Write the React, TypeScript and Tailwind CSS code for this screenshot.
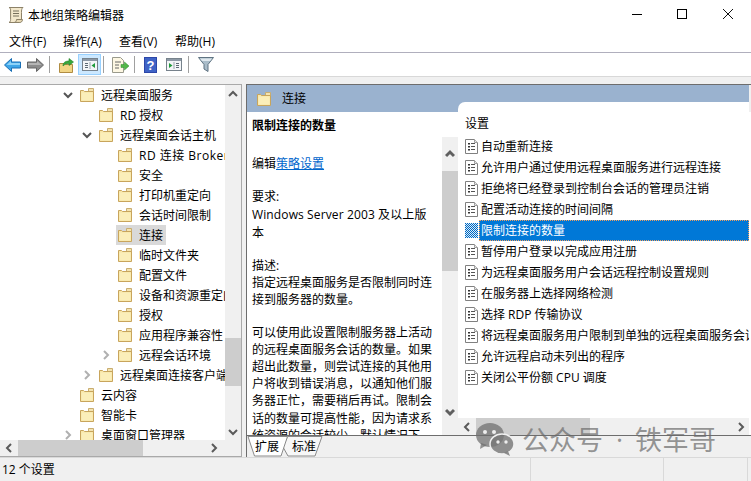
import React from "react";

const Folder = ({ className = "" }: { className?: string }) => (
  <svg width="15" height="14" viewBox="0 0 15 14" className={`shrink-0 ${className}`}>
    <path d="M8.5 0.5h5v11h-5z" fill="#f3e3b0" stroke="#c9ad70" />
    <path d="M0.5 2.5h3l1 1h9v10h-13z" fill="#f8e6a8" stroke="#c8a55c" />
    <path d="M1.5 4.5h11v8h-11z" fill="#fbeeb9" />
  </svg>
);

const Chevron = ({ dir, color = "#5a5a5a", w = 2 }: { dir: "up" | "down" | "left" | "right"; color?: string; w?: number }) => {
  const d = {
    up: "M1 7l4-4 4 4",
    down: "M1 3l4 4 4-4",
    left: "M7 1L3 5l4 4",
    right: "M3 1l4 4-4 4",
  }[dir];
  return (
    <svg width="10" height="10" viewBox="0 0 10 10" className="shrink-0">
      <path d={d} fill="none" stroke={color} strokeWidth={w} />
    </svg>
  );
};

const Policy = ({ selected = false }: { selected?: boolean }) => (
  <svg width="13" height="15" viewBox="0 0 13 15" className="shrink-0">
    <defs>
      <pattern id="dither" width="2" height="2" patternUnits="userSpaceOnUse">
        <rect width="2" height="2" fill="#d8ecfb" />
        <rect width="1" height="1" fill="#0067c0" />
        <rect x="1" y="1" width="1" height="1" fill="#0067c0" />
      </pattern>
    </defs>
    {selected ? (
      <rect width="13" height="15" fill="url(#dither)" />
    ) : (
      <>
        <path d="M0.5 0.5h9l3 3v11h-12z" fill="#fff" stroke="#808080" />
        <path d="M9.5 0.5v3h3" fill="#e8e8e8" stroke="#a0a0a0" />
        <path d="M3 4h2v1.500H3zM3 7h2v1.500H3zM3 10h2v1.500H3z" fill="#333" />
        <path d="M6 4h4v1H6zM6 7h4v1H6zM6 10h4v1H6z" fill="#555" />
      </>
    )}
  </svg>
);

const Sep = () => <div className="w-px h-[17px] bg-[#a0a0a0] shrink-0" />;

type Row = { level: number; label: string; arrow?: "down" | "right"; selected?: boolean; latin?: boolean };
const rows: Row[] = [
  { level: 0, label: "远程桌面服务", arrow: "down" },
  { level: 1, label: "RD 授权" },
  { level: 1, label: "远程桌面会话主机", arrow: "down" },
  { level: 2, label: "RD 连接 Broker", latin: true },
  { level: 2, label: "安全" },
  { level: 2, label: "打印机重定向" },
  { level: 2, label: "会话时间限制" },
  { level: 2, label: "连接", selected: true },
  { level: 2, label: "临时文件夹" },
  { level: 2, label: "配置文件" },
  { level: 2, label: "设备和资源重定向" },
  { level: 2, label: "授权" },
  { level: 2, label: "应用程序兼容性" },
  { level: 2, label: "远程会话环境", arrow: "right" },
  { level: 1, label: "远程桌面连接客户端", arrow: "right" },
  { level: 0, label: "云内容" },
  { level: 0, label: "智能卡" },
  { level: 0, label: "桌面窗口管理器", arrow: "right" },
];

const settings = [
  "自动重新连接",
  "允许用户通过使用远程桌面服务进行远程连接",
  "拒绝将已经登录到控制台会话的管理员注销",
  "配置活动连接的时间间隔",
  "限制连接的数量",
  "暂停用户登录以完成应用注册",
  "为远程桌面服务用户会话远程控制设置规则",
  "在服务器上选择网络检测",
  "选择 RDP 传输协议",
  "将远程桌面服务用户限制到单独的远程桌面服务会话",
  "允许远程启动未列出的程序",
  "关闭公平份额 CPU 调度",
];

const descLines = [
  "可以使用此设置限制服务器上活动",
  "的远程桌面服务会话的数量。如果",
  "超出此数量，则尝试连接的其他用",
  "户将收到错误消息，以通知他们服",
  "务器正忙，需要稍后再试。限制会",
  "话的数量可提高性能，因为请求系",
  "统资源的会话较少。默认情况下，",
];

const levelPad: Record<number, string> = { 0: "pl-[63px]", 1: "pl-[82px]", 2: "pl-[101px]" };

export default function App() {
  return (
    <div
      className="relative w-[751px] h-[481px] overflow-hidden bg-white text-black text-[12px] flex flex-col"
      style={{ fontFamily: '"Open Sans","Noto Sans CJK SC",sans-serif' }}
    >
      {/* Title bar */}
      <div className="h-[30px] flex items-center shrink-0 pl-[7px]">
        <svg width="18" height="18" viewBox="0 0 18 18" className="shrink-0">
          <path d="M4 1.5h12c-1.5 1-1.5 3-1.5 5v7c0 2-1 3-2.5 3H2c1.2-.6 1.6-1.6 1.6-3V4c0-1.300-.5-2-1.600-2.500z" fill="#f3e8cc" stroke="#8d8268" />
          <path d="M6 5h6M6 7.500h6M6 10h6" stroke="#77705c" strokeWidth="1" />
          <path d="M12.500 16.500c1.500 0 3-.8 3-3H9.500c0 2-1 3-2.500 3z" fill="#e6d8b4" stroke="#8d8268" />
        </svg>
        <span className="ml-[3px] pt-[2px]">本地组策略编辑器</span>
        <div className="ml-auto flex items-center pr-[18px] pb-[2px]">
          <div className="w-[10px] h-px bg-black mr-[35px]" />
          <div className="w-[10px] h-[10px] border border-black mr-[36px]" />
          <svg width="10" height="10" viewBox="0 0 10 10">
            <path d="M0 0l10 10M10 0L0 10" stroke="#111" strokeWidth="1" />
          </svg>
        </div>
      </div>

      {/* Menu */}
      <div className="h-[23px] flex items-center shrink-0 pl-[9px] pt-[2px] border-b border-[#b0afbd] box-border">
        <span className="w-[54px]">文件(F)</span>
        <span className="w-[56px]">操作(A)</span>
        <span className="w-[56px]">查看(V)</span>
        <span>帮助(H)</span>
      </div>

      {/* Toolbar */}
      <div className="h-[23px] flex items-center shrink-0 border-b border-[#d8d8d8] box-content pl-[4px]">
        <svg width="17" height="14" viewBox="0 0 17 14" className="shrink-0">
          <path d="M7.500.5L.5 7l7 6.500V10h9V4h-9z" fill="#3fa6e8" stroke="#1b6fb5" />
          <path d="M7 3L2.500 7H16V5H7z" fill="#8fd3f8" />
        </svg>
        <svg width="17" height="14" viewBox="0 0 17 14" className="shrink-0 ml-[6px]">
          <path d="M9.500.5l7 6.500-7 6.500V10h-9V4h9z" fill="#8c8c8c" stroke="#666" />
          <path d="M10 3l4.500 4H1V5h9z" fill="#b5b5b5" />
        </svg>
        <div className="ml-[5px]"><Sep /></div>
        <svg width="16" height="16" viewBox="0 0 16 16" className="shrink-0 ml-[9px]">
          <path d="M.5 6.500h5l1 1h7v8h-13z" fill="#f1d585" stroke="#b08c42" />
          <path d="M4 9c0-4 3-5 6-5V1.500L14.500 5 10 8.500V6.500C7 6.500 5.500 7.500 4 9z" fill="#36a83a" stroke="#23802a" strokeWidth=".6" />
        </svg>
        <div className="ml-[3px] w-[23px] h-[21px] bg-[#cce8ff] border border-[#99d1ff] flex items-center justify-center shrink-0">
          <svg width="16" height="13" viewBox="0 0 16 13">
            <rect x=".5" y=".5" width="15" height="12" fill="#f4f6f8" stroke="#77828c" />
            <rect x="1" y="1" width="14" height="2" fill="#8d99a6" />
            <path d="M3 5h3v1H3zM3 7h3v1H3zM3 9h3v1H3z" fill="#5d6a75" />
            <path d="M8 4v7" stroke="#99a3ac" />
            <path d="M13 5v5L9.500 7.500z" fill="#1e9b3a" />
          </svg>
        </div>
        <div className="ml-[2px]"><Sep /></div>
        <svg width="17" height="16" viewBox="0 0 17 16" className="shrink-0 ml-[8px]">
          <path d="M.5.5h8l3 3v12H.5z" fill="#fdf7e3" stroke="#9a9a8c" />
          <path d="M3 5h6M3 8h4M3 11h4" stroke="#666" />
          <path d="M9 7.500h3.500V5L17 9l-4.500 4v-2.500H9z" fill="#52b848" stroke="#2f8d2c" strokeWidth=".5" />
        </svg>
        <div className="ml-[5px]"><Sep /></div>
        <svg width="13" height="16" viewBox="0 0 13 16" className="shrink-0 ml-[9px]">
          <rect width="13" height="16" fill="#2c46a8" />
          <rect x="1" y="1" width="11" height="14" fill="#3f63c6" />
          <text x="6.500" y="13" textAnchor="middle" fontSize="13" fontWeight="700" fill="#fff" fontFamily="Liberation Sans">?</text>
        </svg>
        <svg width="16" height="13" viewBox="0 0 16 13" className="shrink-0 ml-[9px]">
          <rect x=".5" y=".5" width="15" height="12" fill="#f4f6f8" stroke="#77828c" />
          <rect x="1" y="1" width="14" height="2" fill="#8d99a6" />
          <path d="M3 5v5l3.500-2.500z" fill="#1e9b3a" />
          <path d="M8 4v7" stroke="#99a3ac" />
          <path d="M10 5h3v1h-3zM10 7h3v1h-3zM10 9h3v1h-3z" fill="#5d6a75" />
        </svg>
        <div className="ml-[6px]"><Sep /></div>
        <svg width="16" height="15" viewBox="0 0 16 15" className="shrink-0 ml-[9px]">
          <path d="M.5.500h15l-5.500 7v7l-4-2.500V7.500z" fill="#a9bcc9" stroke="#5f7382" />
          <path d="M2 1.500h12l-2 2.500H4z" fill="#dfe8ee" />
        </svg>
      </div>

      {/* Main */}
      <div className="flex-1 min-h-0 flex bg-[#f0f0f0] pt-[7px]">
        {/* Tree pane */}
        <div className="w-[242px] shrink-0 bg-white border-t border-r border-b border-[#a9a9a9] flex flex-col">
          <div className="flex-1 min-h-0 flex">
            <div className="flex-1 min-w-0 overflow-hidden">
              {rows.map((r, i) => (
                <div key={i} className={`h-[20px] flex items-center whitespace-nowrap ${levelPad[r.level]}`}>
                  <div className="w-[10px] shrink-0 flex justify-center">
                    {r.arrow && <Chevron dir={r.arrow} color={r.arrow === "down" ? "#555" : "#b0b0b0"} />}
                  </div>
                  <div className={`flex items-center h-[20px] pl-[2px] pr-[3px] ml-[5px] ${r.selected ? "bg-[#d9d9d9]" : ""}`}>
                    <Folder />
                    <span className={`ml-[6px] pt-[2px] ${r.latin ? "tracking-[0.5px]" : ""}`}>{r.label}</span>
                  </div>
                </div>
              ))}
            </div>
            <div className="w-[16px] shrink-0 bg-[#f0f0f0] flex flex-col items-center pt-[4px] pb-[3px]">
              <Chevron dir="up" />
              <div className="mt-[239px] h-[48px] w-[16px] bg-[#cdcdcd]" />
              <div className="mt-auto"><Chevron dir="down" /></div>
            </div>
          </div>
          <div className="h-[16px] shrink-0 bg-[#f0f0f0] flex items-center pl-[4px] pr-[22px]">
            <Chevron dir="left" />
            <div className="ml-[4px] h-[16px] w-[125px] bg-[#cdcdcd]" />
            <div className="ml-auto"><Chevron dir="right" /></div>
          </div>
        </div>

        {/* Right pane */}
        <div className="ml-[4px] flex-1 min-w-0 flex flex-col border-t border-l border-[#6d6d6d]">
          <div className="h-[27px] shrink-0 bg-[#9ab2cf] flex items-center pl-[10px] mr-[2px]">
            <Folder />
            <span className="ml-[10px]">连接</span>
          </div>
          <div className="flex-1 min-h-0 flex bg-white">
            {/* Description */}
            <div className="w-[211px] shrink-0 flex min-h-0">
              <div className="w-[195px] shrink-0 overflow-hidden pl-[5px] pt-[5px] leading-[17.2px]">
                <div className="font-bold">限制连接的数量</div>
                <div className="mt-[21px]">
                  编辑<span className="text-[#0066cc] underline">策略设置</span>
                </div>
                <div className="mt-[16px]">要求:</div>
                <div className="tracking-[0.12px]">Windows Server 2003 及以上版</div>
                <div className="pt-[1px]">本</div>
                <div className="mt-[16px]">描述:</div>
                <div>指定远程桌面服务是否限制同时连</div>
                <div>接到服务器的数量。</div>
                <div className="mt-[15px] whitespace-nowrap">
                  {descLines.map((l) => (
                    <div key={l}>{l}</div>
                  ))}
                </div>
              </div>
              <div className="w-[16px] shrink-0 mt-[25px] h-[299px] bg-[#f0f0f0] flex flex-col items-center">
                <div className="h-[34px] flex items-center"><Chevron dir="up" w={3} color="#606060" /></div>
                <div className="h-[100px] w-[16px] bg-[#cdcdcd]" />
                <div className="mt-auto mb-[19px]"><Chevron dir="down" w={3} color="#606060" /></div>
              </div>
            </div>
            {/* List */}
            <div className="flex-1 min-w-0 -mt-[10px] flex flex-col mr-[2px]">
              <div className="flex-1 min-h-0 bg-white rounded-tl-[7px] pl-[7px] pt-[13px] overflow-hidden">
                <div className="h-[17px] leading-[17px] mb-[4px]">设置</div>
                {settings.map((s, i) => {
                  const sel = i === 4;
                  return (
                    <div key={s} className="h-[21px] flex items-center whitespace-nowrap">
                      <Policy selected={sel} />
                      <div
                        className={`ml-[1px] flex-1 min-w-0 h-[21px] flex items-center pl-[1px] border border-dotted ${
                          sel ? "bg-[#0078d7] text-white border-[#f0a060]" : "border-transparent"
                        }`}
                      >
                        {s}
                      </div>
                    </div>
                  );
                })}
              </div>
              <div className="h-[17px] shrink-0 bg-[#f0f0f0] flex items-center pl-[4px] pr-[3px]">
                <Chevron dir="left" />
                <div className="ml-[4px] h-[17px] w-[114px] bg-[#cdcdcd]" />
                <div className="ml-auto"><Chevron dir="right" /></div>
              </div>
            </div>
          </div>
          {/* Tabs */}
          <div className="relative h-[20px] shrink-0 bg-[#f0f0f0] border-t border-[#6d6d6d] box-content flex items-center pt-[1px]">
            <svg width="80" height="21" viewBox="0 0 80 21" className="absolute left-0 top-0">
              <path d="M40.500 0.500L36 11l5 9h27l7-19.500z" fill="#f7f7f7" stroke="#8a8a8a" />
              <path d="M1 0.500L7.500 20h26.500L40.500 0.500z" fill="#ffffff" stroke="#8a8a8a" />
            </svg>
            <span className="relative ml-[8px] w-[24px]">扩展</span>
            <span className="relative ml-[13px] w-[24px]">标准</span>
          </div>
        </div>
      </div>

      {/* Status bar */}
      <div className="h-[23px] shrink-0 bg-[#f0f0f0] border-t border-[#d9d9d9] flex items-center box-content">
        <span className="w-[530px] pl-[2px] h-full flex items-center">12 个设置</span>
        <div className="w-[133px] h-full border-l border-[#d9d9d9]" />
        <div className="w-[85px] h-full border-l border-r border-[#d9d9d9]" />
      </div>

      {/* Watermark */}
      <div className="absolute left-[476px] top-[423px] flex items-center text-[rgba(105,105,105,0.7)] pointer-events-none">
        <svg width="38" height="33" viewBox="0 0 38 33" className="shrink-0">
          <ellipse cx="14" cy="12" rx="14" ry="12" fill="rgba(110,110,110,0.72)" />
          <path d="M5 20l-1 6 7-4z" fill="rgba(110,110,110,0.72)" />
          <ellipse cx="26" cy="21" rx="12" ry="10" fill="rgba(120,120,120,0.82)" stroke="#f0f0f0" strokeWidth="1.500" />
          <path d="M32 28l2 5-6-3z" fill="rgba(120,120,120,0.82)" />
          <circle cx="9" cy="9" r="2" fill="#eee" />
          <circle cx="18" cy="9" r="2" fill="#eee" />
          <circle cx="22" cy="19" r="1.700" fill="#eee" />
          <circle cx="30" cy="19" r="1.700" fill="#eee" />
        </svg>
        <span className="ml-[8px] text-[27px] leading-[33px] whitespace-nowrap">公众号</span>
        <span className="ml-[13px] text-[27px] leading-[33px]">·</span>
        <span className="ml-[12px] text-[27px] leading-[33px] whitespace-nowrap">铁军哥</span>
      </div>
    </div>
  );
}
